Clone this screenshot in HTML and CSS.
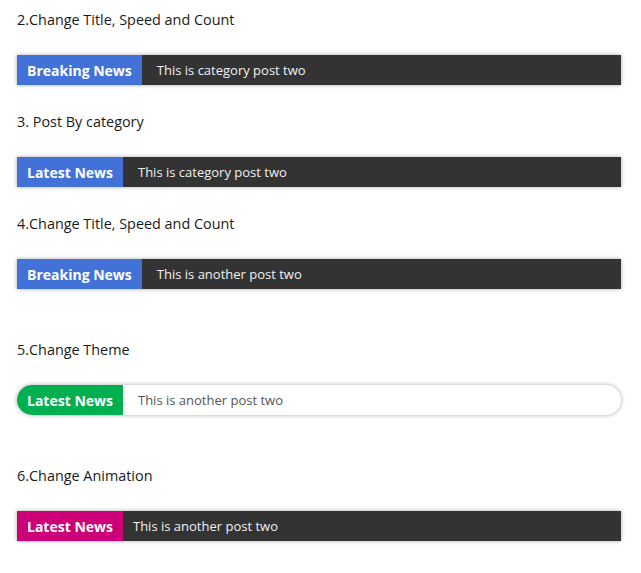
FILE: index.html
```html
<!DOCTYPE html>
<html>
<head>
<meta charset="utf-8">
<link rel="stylesheet" href="styles.css">
</head>
<body>
<div class="page">
  <p class="heading">2.Change Title, Speed and Count</p>
  <div class="ticker">
    <span class="label label-blue">Breaking News</span>
    <span class="item item-wide">This is category post two</span>
  </div>

  <p class="heading">3. Post By category</p>
  <div class="ticker">
    <span class="label label-blue">Latest News</span>
    <span class="item item-wide">This is category post two</span>
  </div>

  <p class="heading">4.Change Title, Speed and Count</p>
  <div class="ticker">
    <span class="label label-blue">Breaking News</span>
    <span class="item item-wide">This is another post two</span>
  </div>

  <p class="heading heading-spaced">5.Change Theme</p>
  <div class="ticker ticker-light">
    <span class="label label-green">Latest News</span>
    <span class="item item-wide">This is another post two</span>
  </div>

  <p class="heading heading-spaced">6.Change Animation</p>
  <div class="ticker">
    <span class="label label-pink">Latest News</span>
    <span class="item">This is another post two</span>
  </div>
</div>
</body>
</html>
```

FILE: styles.css
```css
html, body {
  margin: 0;
  padding: 0;
  background: #ffffff;
}

.page {
  display: flex;
  flex-direction: column;
  padding: 9px 20px 0 17px;
  width: 604px;
  font-family: "Open Sans", "Noto Sans", sans-serif;
}

.heading {
  margin: 0 0 25px 0;
  font-size: 14.4px;
  line-height: 21px;
  color: #1a1a1a;
}

.heading-spaced {
  margin-top: 24px;
}

.ticker {
  display: flex;
  align-items: stretch;
  height: 30px;
  background: #333333;
  box-shadow: 0 0 4px rgba(0, 0, 0, 0.35);
  margin-bottom: 26px;
}

.label {
  display: flex;
  align-items: center;
  padding: 0 10px;
  font-size: 14px;
  font-weight: 700;
  color: #ffffff;
  white-space: nowrap;
}

.label-blue { background: #4272d7; }
.label-green { background: #00b050; border-radius: 15px 0 0 15px; }
.label-pink { background: #cc0077; }

.item {
  display: flex;
  align-items: center;
  padding-left: 10px;
  font-size: 13px;
  color: #f0f0f0;
  white-space: nowrap;
}

.item-wide {
  padding-left: 15px;
}

.ticker-light {
  background: #ffffff;
  border-radius: 15px;
  box-shadow: 0 0 4px rgba(0, 0, 0, 0.35);
}

.ticker-light .item {
  color: #555555;
}
```
